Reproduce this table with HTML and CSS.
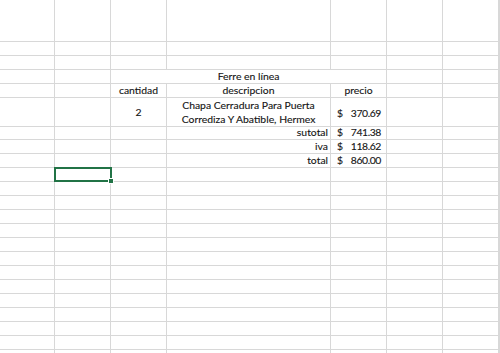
FILE: index.html
```html
<!DOCTYPE html>
<html lang="es">
<head>
<meta charset="utf-8">
<title>Ferre en línea</title>
<link rel="stylesheet" href="styles.css">
</head>
<body>
<div class="sheet">
  <div class="row tall"><div></div><div></div><div></div><div></div><div></div><div></div><div></div><div></div></div>
  <div class="row"><div></div><div></div><div></div><div></div><div></div><div></div><div></div><div></div></div>
  <div class="row"><div></div><div></div><div></div><div></div><div></div><div></div><div></div><div></div></div>
  <div class="row"><div></div><div></div><div class="merged c">Ferre en línea</div><div></div><div></div><div></div></div>
  <div class="row"><div></div><div></div><div class="c">cantidad</div><div class="c">descripcion</div><div class="c">precio</div><div></div><div></div><div></div></div>
  <div class="row double"><div></div><div></div><div class="c">2</div><div class="c wrap">Chapa Cerradura Para Puerta<br>Corrediza Y Abatible, Hermex</div><div class="money"><span class="cur">$</span><span class="num">370.69</span></div><div></div><div></div><div></div></div>
  <div class="row"><div></div><div></div><div></div><div class="r">sutotal</div><div class="money"><span class="cur">$</span><span class="num">741.38</span></div><div></div><div></div><div></div></div>
  <div class="row"><div></div><div></div><div></div><div class="r">iva</div><div class="money"><span class="cur">$</span><span class="num">118.62</span></div><div></div><div></div><div></div></div>
  <div class="row"><div></div><div></div><div></div><div class="r">total</div><div class="money"><span class="cur">$</span><span class="num">860.00</span></div><div></div><div></div><div></div></div>
  <div class="row"><div></div><div class="active"><span class="selection"><span class="handle"></span></span></div><div></div><div></div><div></div><div></div><div></div><div></div></div>
  <div class="row"><div></div><div></div><div></div><div></div><div></div><div></div><div></div><div></div></div>
  <div class="row"><div></div><div></div><div></div><div></div><div></div><div></div><div></div><div></div></div>
  <div class="row"><div></div><div></div><div></div><div></div><div></div><div></div><div></div><div></div></div>
  <div class="row"><div></div><div></div><div></div><div></div><div></div><div></div><div></div><div></div></div>
  <div class="row"><div></div><div></div><div></div><div></div><div></div><div></div><div></div><div></div></div>
  <div class="row"><div></div><div></div><div></div><div></div><div></div><div></div><div></div><div></div></div>
  <div class="row"><div></div><div></div><div></div><div></div><div></div><div></div><div></div><div></div></div>
  <div class="row"><div></div><div></div><div></div><div></div><div></div><div></div><div></div><div></div></div>
  <div class="row"><div></div><div></div><div></div><div></div><div></div><div></div><div></div><div></div></div>
  <div class="row"><div></div><div></div><div></div><div></div><div></div><div></div><div></div><div></div></div>
  <div class="row"><div></div><div></div><div></div><div></div><div></div><div></div><div></div><div></div></div>
  <div class="row"><div></div><div></div><div></div><div></div><div></div><div></div><div></div><div></div></div>
  <div class="row"><div></div><div></div><div></div><div></div><div></div><div></div><div></div><div></div></div>
  <div class="row"><div></div><div></div><div></div><div></div><div></div><div></div><div></div><div></div></div>
</div>
</body>
</html>
```
FILE: styles.css
```css
html, body {
  margin: 0;
  padding: 0;
  background: #ffffff;
  overflow: hidden;
}

.sheet {
  width: 500px;
  height: 353px;
  overflow: hidden;
  font-family: Lato, "Open Sans", sans-serif;
  font-size: 10.4px;
  color: #141414;
  -webkit-text-stroke: 0.12px #141414;
}

.row {
  display: grid;
  grid-template-columns: 55px 56px 56px 164px 56px 56px 56px 1fr;
  height: 14px;
}

.row.tall {
  height: 42px;
}

.row.double {
  height: 28px;
}

.row > div {
  box-sizing: border-box;
  border-right: 1px solid #d8d8d8;
  border-bottom: 1px solid #d8d8d8;
  line-height: 13px;
  white-space: nowrap;
  min-width: 0;
}

.row > .merged {
  grid-column: span 3;
}

.c {
  text-align: center;
}

.double > .c {
  display: flex;
  align-items: center;
  justify-content: center;
}

.row > .wrap {
  line-height: 14px;
}

.r {
  text-align: right;
  padding-right: 2px;
}

.row > .money {
  display: flex;
  align-items: center;
  padding: 0 5px 0 6px;
}

.double > .money {
  padding-top: 3px;
}

.cur {
  flex: 1 1 auto;
}

.num {
  flex: 0 0 auto;
  text-align: right;
  letter-spacing: -0.4px;
}

.active {
  position: relative;
}

.selection {
  position: absolute;
  left: -1px;
  top: -1px;
  right: -2px;
  bottom: -1px;
  border: 2px solid #217346;
}

.handle {
  position: absolute;
  right: -4px;
  bottom: -4px;
  width: 4px;
  height: 4px;
  background: #217346;
  border: 1px solid #ffffff;
}
```
